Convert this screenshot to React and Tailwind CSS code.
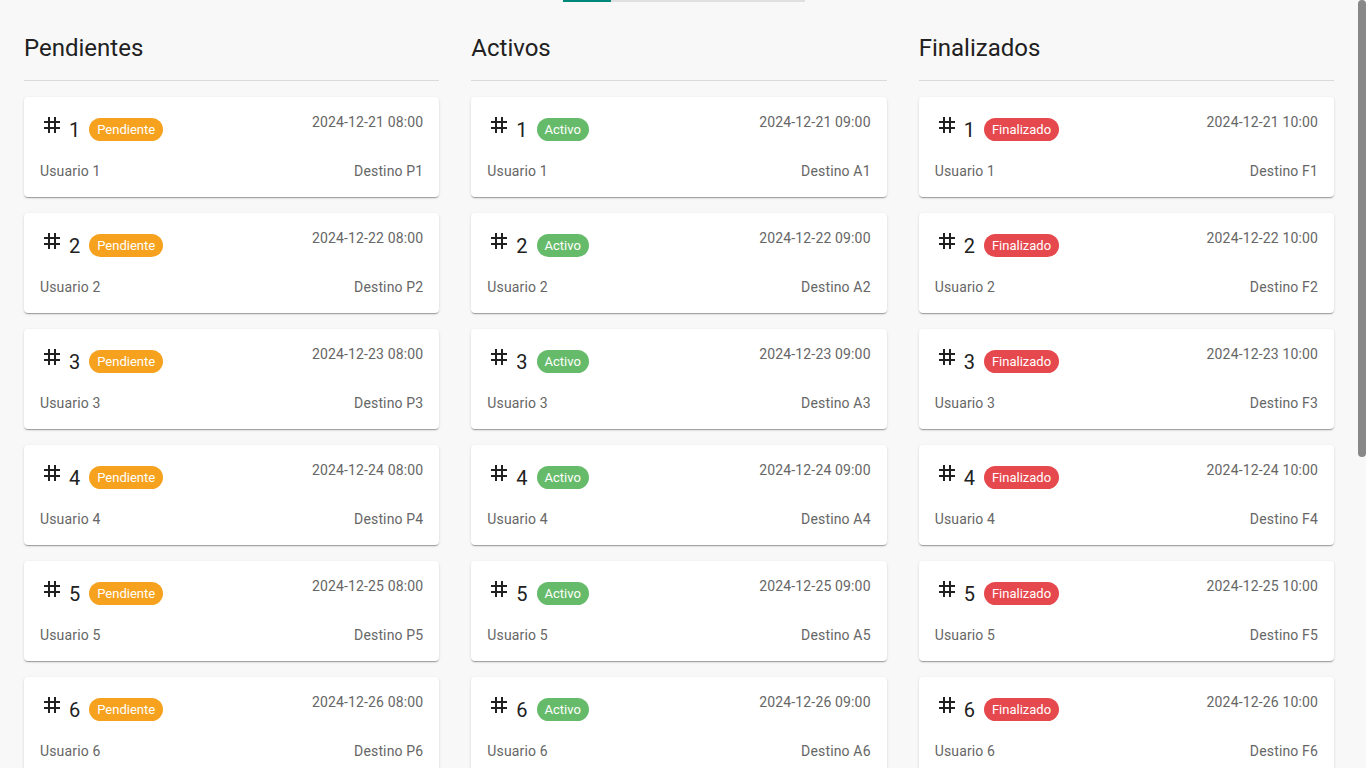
import React from 'react';

const COLUMNS = [
  { title: 'Pendientes', label: 'Pendiente', badge: 'bg-[#f6a21e]', hour: '08:00', code: 'P' },
  { title: 'Activos', label: 'Activo', badge: 'bg-[#66bb6a]', hour: '09:00', code: 'A' },
  { title: 'Finalizados', label: 'Finalizado', badge: 'bg-[#e5484d]', hour: '10:00', code: 'F' },
];

const ITEMS = Array.from({ length: 10 }, (_, i) => i + 1);

const TagIcon = () => (
  <svg viewBox="0 0 24 24" className="w-6 h-6 shrink-0 fill-[#212121]">
    <path d="M20 10V8h-4V4h-2v4h-4V4H8v4H4v2h4v4H4v2h4v4h2v-4h4v4h2v-4h4v-2h-4v-4h4zm-6 4h-4v-4h4v4z" />
  </svg>
);

const TripCard = ({ n, col }) => {
  const day = 20 + n;
  return (
    <div className="bg-white rounded p-4 shadow-[0_2px_1px_-1px_rgba(0,0,0,0.2),0_1px_1px_0_rgba(0,0,0,0.14),0_1px_3px_0_rgba(0,0,0,0.12)]">
      {/* fila superior */}
      <div className="flex items-start justify-between h-8 mb-4">
        <div className="flex items-start">
          <TagIcon />
          <span className="ml-[5px] mt-[1px] text-[20px] leading-8 text-[#212121]">{n}</span>
          <span
            className={`ml-[9px] mt-[5px] h-[23px] px-2 rounded-full text-[13px] leading-[23px] text-white ${col.badge}`}
          >
            {col.label}
          </span>
        </div>
        <span className="-mt-[1px] text-sm leading-5 tracking-[0.01071em] text-[#666]">
          {`2024-12-${day} ${col.hour}`}
        </span>
      </div>

      {/* fila inferior */}
      <div className="flex items-center justify-between text-sm leading-5 tracking-[0.01071em] text-[#666]">
        <span>Usuario {n}</span>
        <span>Destino {col.code}{n}</span>
      </div>
    </div>
  );
};

const App = () => {
  return (
    <div className="flex h-screen overflow-hidden bg-[#f8f8f8] font-['Roboto',sans-serif]">
      <main className="flex-1 min-w-0">
        {/* Barra de pestañas */}
        <div className="flex h-[2px] ml-[563px] w-[242px]">
          <div className="w-12 bg-[#00897b]" />
          <div className="flex-1 bg-[#e0e0e0]" />
        </div>

        <div className="grid grid-cols-3 gap-8 px-6 pt-[30px] pb-12">
          {COLUMNS.map((col) => (
            <section key={col.title}>
              <h2 className="text-2xl leading-8 text-[#212121] pb-4 border-b border-[#dadada]">
                {col.title}
              </h2>
              <div className="mt-4 flex flex-col gap-4">
                {ITEMS.map((n) => (
                  <TripCard key={n} n={n} col={col} />
                ))}
              </div>
            </section>
          ))}
        </div>
      </main>

      {/* Barra de desplazamiento */}
      <aside className="w-2 shrink-0">
        <div className="h-[457px] rounded bg-[#888]" />
      </aside>
    </div>
  );
};

export default App;
